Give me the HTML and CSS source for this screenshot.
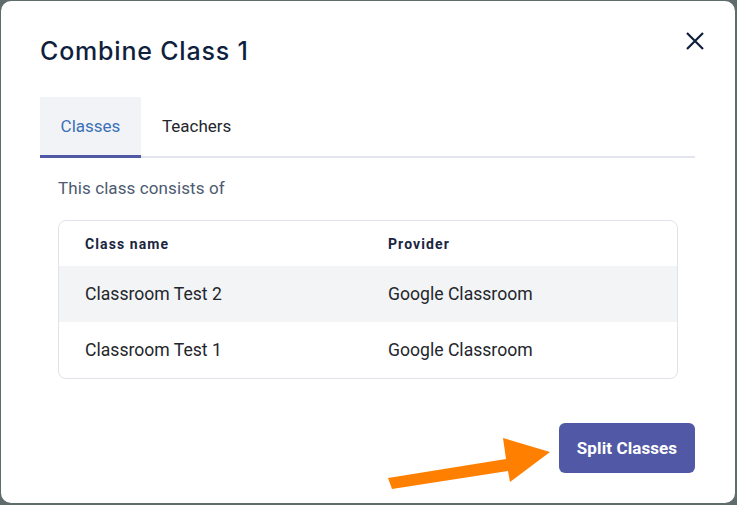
FILE: index.html
```html
<!DOCTYPE html>
<html lang="en">
<head>
  <meta charset="UTF-8">
  <meta name="viewport" content="width=device-width, initial-scale=1.0">
  <title>Combine Class 1</title>
  <link rel="stylesheet" href="styles.css">
</head>
<body>

<div class="modal">
  <div class="modal-header">
    <h2>Combine Class 1</h2>
    <button class="close-btn" aria-label="Close">
      <svg width="18" height="18" viewBox="0 0 18 18">
        <path d="M1 1 L17 17 M17 1 L1 17" stroke="#0f1f3d" stroke-width="2.2" fill="none"/>
      </svg>
    </button>
  </div>

  <div class="tabs">
    <div class="tab active">Classes</div>
    <div class="tab">Teachers</div>
  </div>

  <div class="tab-body">
    <p class="intro">This class consists of</p>

    <div class="class-table">
      <div class="row head">
        <div>Class name</div>
        <div>Provider</div>
      </div>
      <div class="row shaded">
        <div>Classroom Test 2</div>
        <div>Google Classroom</div>
      </div>
      <div class="row">
        <div>Classroom Test 1</div>
        <div>Google Classroom</div>
      </div>
    </div>
  </div>

  <div class="modal-footer">
    <button class="split-btn">Split Classes</button>
  </div>
</div>

<!-- pointer arrow at the button -->
<svg class="pointer" width="737" height="505" viewBox="0 0 737 505">
  <polygon points="388,478 506,459 503,438 550,452 510,482 508,471 392,489" fill="#ff8000"/>
</svg>

</body>
</html>
```

FILE: styles.css
```css
body {
  margin: 0;
  padding: 1px 2px 2px 1px;
  background-color: #5f6c6c;
  font-family: Roboto, "Liberation Sans", sans-serif;
  height: 505px;
  box-sizing: border-box;
  overflow: hidden;
}

.modal {
  background-color: #ffffff;
  border-radius: 10px;
  height: 502px;
  padding: 0 40px 0 39px;
  box-sizing: border-box;
}

.modal-header {
  display: flex;
  justify-content: space-between;
  align-items: flex-start;
  padding-top: 34px;
}

.modal-header h2 {
  margin: 0;
  font-family: Inter, "Noto Sans", sans-serif;
  font-weight: 500;
  font-size: 25px;
  line-height: 32px;
  color: #0f1f3d;
  letter-spacing: 0.8px;
}

.close-btn {
  background: none;
  border: none;
  padding: 0;
  margin: -3px -9px 0 0;
  cursor: pointer;
}

.tabs {
  display: flex;
  margin-top: 30px;
  border-bottom: 2px solid #e3e6ef;
}

.tab {
  padding: 0 21px;
  height: 59px;
  line-height: 59px;
  font-size: 17px;
  color: #24262b;
  margin-bottom: -2px;
}

.tab.active {
  background-color: #f2f3f7;
  color: #3a70b6;
  border-bottom: 3px solid #5059a5;
  height: 58px;
  line-height: 58px;
  padding: 0 20px;
  width: 61px;
  text-align: center;
}

.tab-body {
  padding: 0 17px 0 18px;
}

.intro {
  margin: 19px 0 0;
  font-size: 17px;
  line-height: 22px;
  color: #4d5a70;
  letter-spacing: 0.1px;
}

.class-table {
  margin-top: 21px;
  border: 1px solid #e1e3ea;
  border-radius: 8px;
  overflow: hidden;
}

.row {
  display: grid;
  grid-template-columns: 303px 1fr;
  padding-left: 26px;
  height: 56px;
  align-items: center;
  font-size: 17.6px;
  color: #23262c;
}

.row.head {
  height: 45px;
  font-size: 14px;
  font-weight: 700;
  letter-spacing: 1.1px;
  color: #1b2540;
}

.row.shaded {
  background-color: #f3f4f6;
}

.modal-footer {
  display: flex;
  justify-content: flex-end;
  margin-top: 44px;
}

.split-btn {
  background-color: #5159a6;
  color: #ffffff;
  border: none;
  border-radius: 6px;
  width: 136px;
  height: 50px;
  font-family: Roboto, "Liberation Sans", sans-serif;
  font-weight: 700;
  font-size: 17px;
  letter-spacing: 0.1px;
  cursor: pointer;
}

.pointer {
  position: absolute;
  left: 0;
  top: 0;
  pointer-events: none;
}
```
